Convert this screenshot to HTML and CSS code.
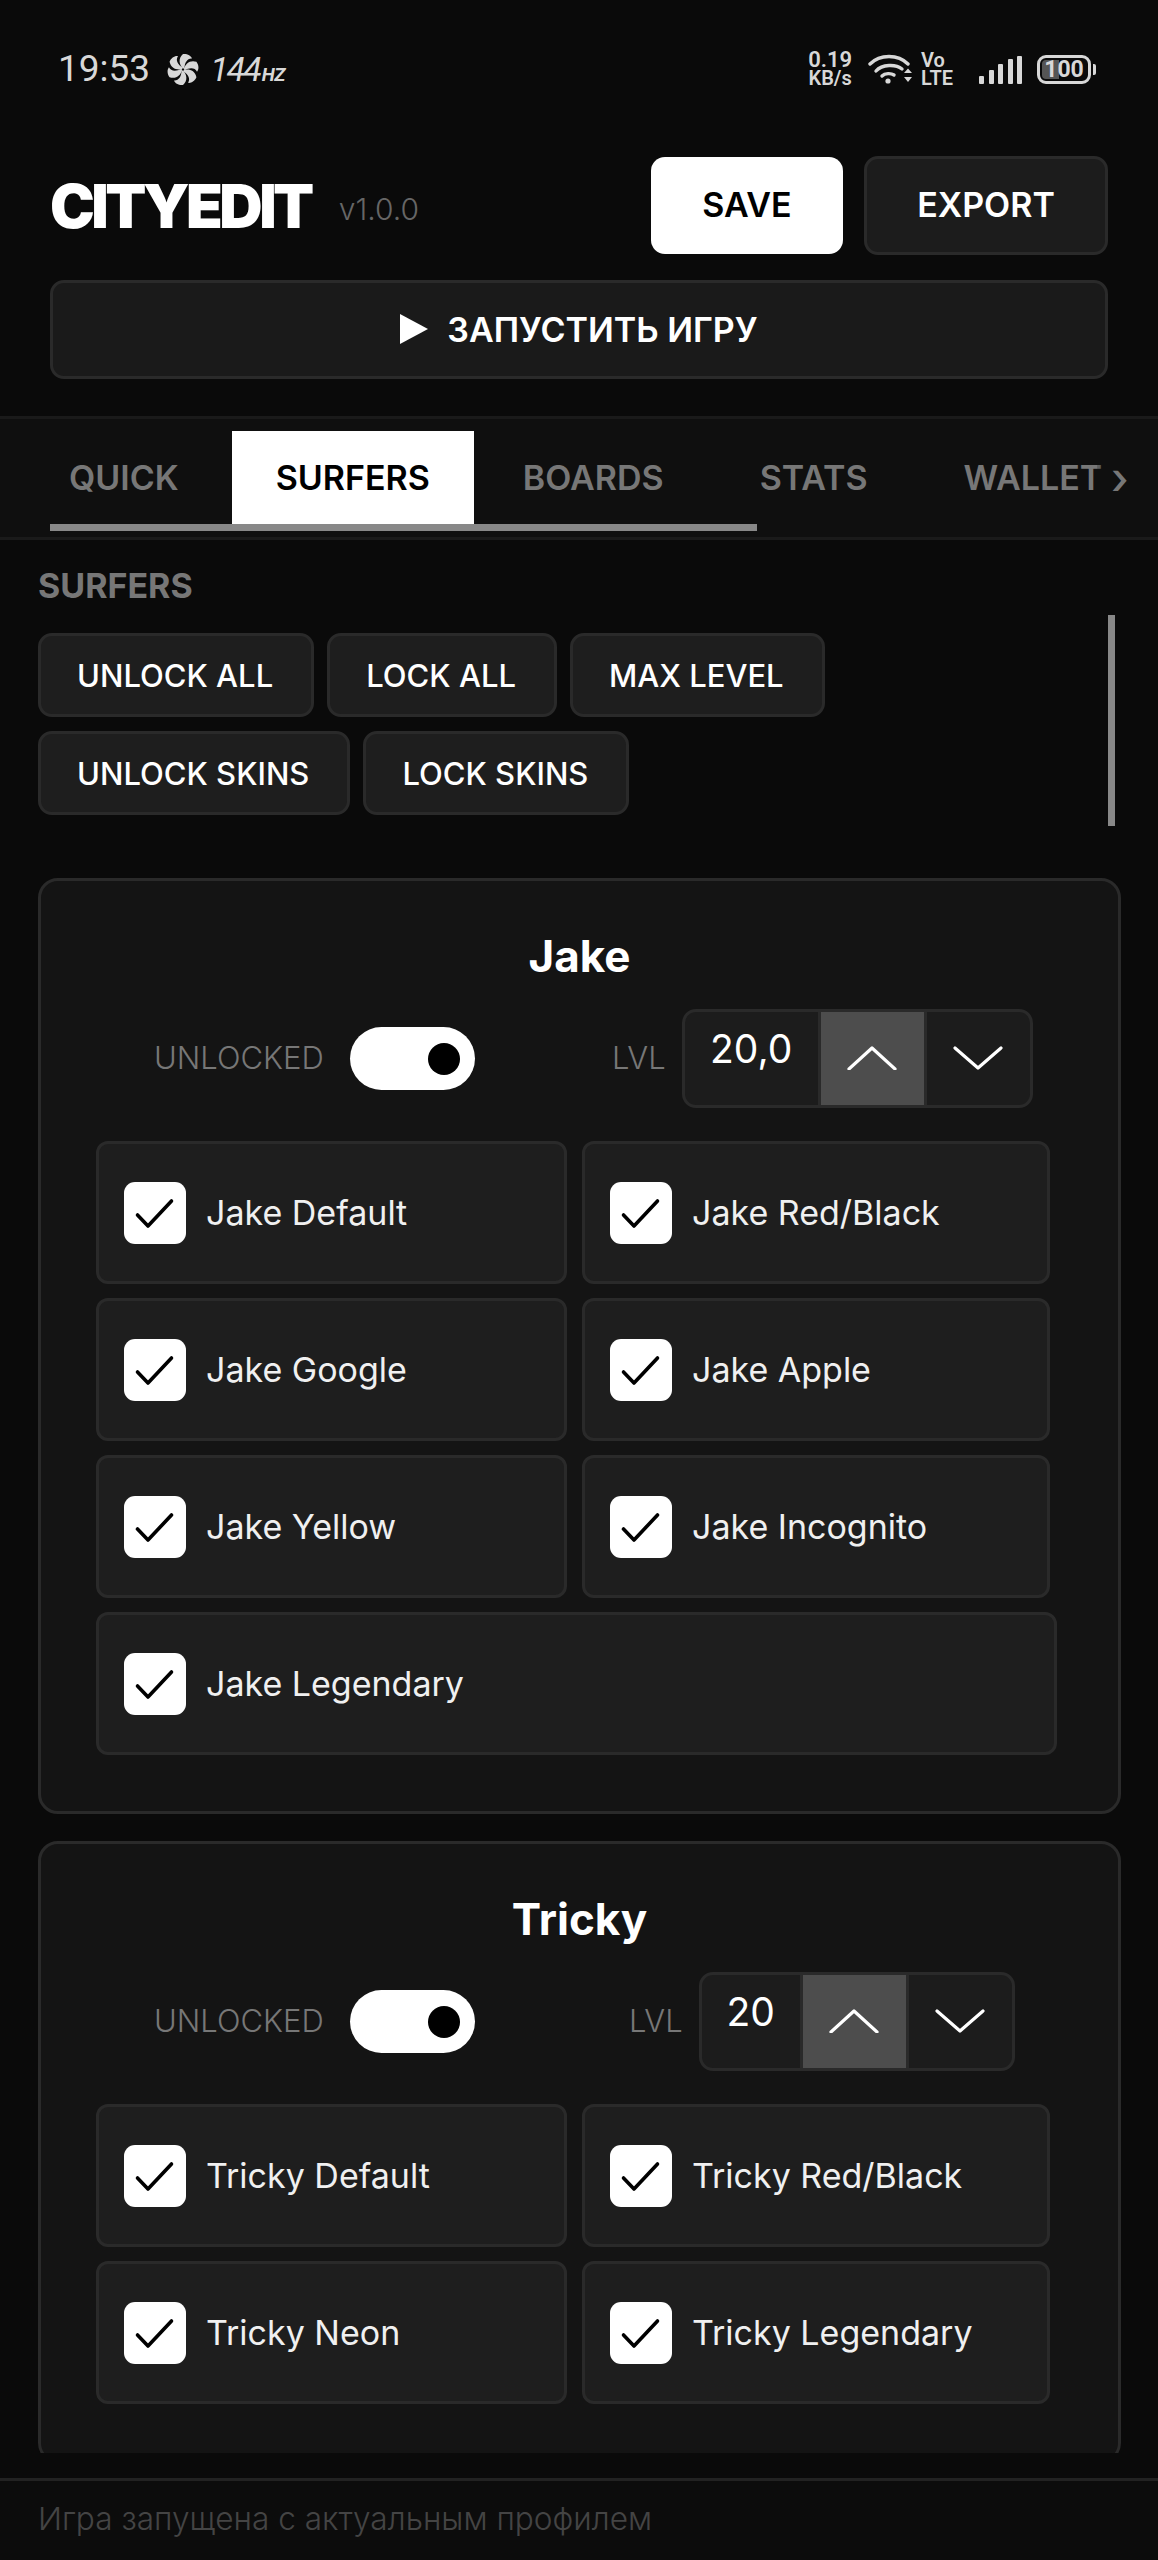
FILE: index.html
```html
<!DOCTYPE html>
<html lang="ru">
<head>
    <meta charset="UTF-8">
    <meta name="viewport" content="width=device-width, initial-scale=1.0">
    <title>CityEdit</title>
    <link rel="stylesheet" href="styles.css">
</head>
<body>

    <svg class="sprites" width="0" height="0">
        <symbol id="check" viewBox="0 0 62 62">
            <path d="M13.5 33 L24 44 L47.5 19" fill="none" stroke="#000" stroke-width="3.6" stroke-linecap="round" stroke-linejoin="round"/>
        </symbol>
        <symbol id="chev-up" viewBox="0 0 50 24">
            <path d="M2 23 L25 2 L48 23" fill="none" stroke="#fff" stroke-width="3.2" stroke-linecap="round" stroke-linejoin="round"/>
        </symbol>
        <symbol id="chev-down" viewBox="0 0 50 24">
            <path d="M2 2 L25 22 L48 2" fill="none" stroke="#fff" stroke-width="3.2" stroke-linecap="round" stroke-linejoin="round"/>
        </symbol>
    </svg>

    <div id="app">
        <div class="status">
            <div class="status-left">
                <span class="clock">19:53</span>
                <svg class="fan" width="32" height="33" viewBox="-16 -16 32 32">
                    <g fill="#d8d8d8">
                        <path id="blade" d="M0 -1 C-4 -5 -5 -11 0 -15.5 C4 -16 8 -14 9 -11 C4.5 -11.5 1.5 -7 1.5 -1 Z"/>
                        <use href="#blade" transform="rotate(60)"/>
                        <use href="#blade" transform="rotate(120)"/>
                        <use href="#blade" transform="rotate(180)"/>
                        <use href="#blade" transform="rotate(240)"/>
                        <use href="#blade" transform="rotate(300)"/>
                    </g>
                </svg>
                <span class="hz">144<small>HZ</small></span>
            </div>
            <div class="status-right">
                <div class="speed">0.19<br>KB/s</div>
                <svg class="wifi" width="44" height="30" viewBox="0 0 44 30">
                    <g fill="none" stroke="#d8d8d8" stroke-width="3.4" stroke-linecap="round">
                        <path d="M2 10 C12 0 30 0 40 10"/>
                        <path d="M8 17 C14 10 28 10 34 15"/>
                        <path d="M14 22 C17 19 23 19 26 21"/>
                    </g>
                    <circle cx="20" cy="27" r="2.6" fill="#d8d8d8"/>
                    <path d="M36 19 L40 14.5 L44 19 Z M36 23 L44 23 L40 28 Z" fill="#d8d8d8"/>
                </svg>
                <div class="volte">Vo<br>LTE</div>
                <div class="signal">
                    <i class="bar-1"></i><i class="bar-2"></i><i class="bar-3"></i><i class="bar-4"></i><i class="bar-5"></i>
                </div>
                <div class="battery"><div class="battery-body"><span>100</span></div><i></i></div>
            </div>
        </div>

        <div class="top">
            <div class="title-row">
                <div class="brand">
                    <span class="logo">CITYEDIT</span>
                    <span class="version">v1.0.0</span>
                </div>
                <div class="actions">
                    <button class="btn-save">SAVE</button>
                    <button class="btn-export">EXPORT</button>
                </div>
            </div>
            <button class="btn-run">
                <svg width="28" height="30" viewBox="0 0 28 30"><path d="M0 0 L28 15 L0 30 Z" fill="#fff"/></svg>
                ЗАПУСТИТЬ ИГРУ
            </button>
        </div>

        <div class="tabs">
            <div class="tab-row">
                <span class="tab">QUICK</span>
                <span class="tab active">SURFERS</span>
                <span class="tab">BOARDS</span>
                <span class="tab">STATS</span>
                <span class="tab">WALLET</span>
            </div>
            <div class="tab-fade">›</div>
            <div class="tab-scroll"></div>
        </div>

        <div class="content">
            <div class="content-scroll"></div>
            <div class="section-label">SURFERS</div>
            <div class="bulk">
                <div class="bulk-row">
                    <button class="btn-bulk">UNLOCK ALL</button>
                    <button class="btn-bulk">LOCK ALL</button>
                    <button class="btn-bulk">MAX LEVEL</button>
                </div>
                <div class="bulk-row">
                    <button class="btn-bulk">UNLOCK SKINS</button>
                    <button class="btn-bulk">LOCK SKINS</button>
                </div>
            </div>

            <div class="card">
                <h2>Jake</h2>
                <div class="controls jake-controls">
                    <div class="unlock">
                        <span class="muted">UNLOCKED</span>
                        <div class="toggle"><i></i></div>
                    </div>
                    <div class="level">
                        <span class="muted">LVL</span>
                        <div class="stepper">
                            <span class="value wide">20,0</span>
                            <span class="step hot"><svg width="50" height="24"><use href="#chev-up"/></svg></span>
                            <span class="step"><svg width="50" height="24"><use href="#chev-down"/></svg></span>
                        </div>
                    </div>
                </div>
                <div class="skins">
                    <label class="skin"><span class="box"><svg width="62" height="62"><use href="#check"/></svg></span>Jake Default</label>
                    <label class="skin"><span class="box"><svg width="62" height="62"><use href="#check"/></svg></span>Jake Red/Black</label>
                    <label class="skin"><span class="box"><svg width="62" height="62"><use href="#check"/></svg></span>Jake Google</label>
                    <label class="skin"><span class="box"><svg width="62" height="62"><use href="#check"/></svg></span>Jake Apple</label>
                    <label class="skin"><span class="box"><svg width="62" height="62"><use href="#check"/></svg></span>Jake Yellow</label>
                    <label class="skin"><span class="box"><svg width="62" height="62"><use href="#check"/></svg></span>Jake Incognito</label>
                    <label class="skin skin-wide"><span class="box"><svg width="62" height="62"><use href="#check"/></svg></span>Jake Legendary</label>
                </div>
            </div>

            <div class="card">
                <h2>Tricky</h2>
                <div class="controls tricky-controls">
                    <div class="unlock">
                        <span class="muted">UNLOCKED</span>
                        <div class="toggle"><i></i></div>
                    </div>
                    <div class="level">
                        <span class="muted">LVL</span>
                        <div class="stepper">
                            <span class="value">20</span>
                            <span class="step hot"><svg width="50" height="24"><use href="#chev-up"/></svg></span>
                            <span class="step"><svg width="50" height="24"><use href="#chev-down"/></svg></span>
                        </div>
                    </div>
                </div>
                <div class="skins">
                    <label class="skin"><span class="box"><svg width="62" height="62"><use href="#check"/></svg></span>Tricky Default</label>
                    <label class="skin"><span class="box"><svg width="62" height="62"><use href="#check"/></svg></span>Tricky Red/Black</label>
                    <label class="skin"><span class="box"><svg width="62" height="62"><use href="#check"/></svg></span>Tricky Neon</label>
                    <label class="skin"><span class="box"><svg width="62" height="62"><use href="#check"/></svg></span>Tricky Legendary</label>
                </div>
            </div>
        </div>

        <div class="footer">Игра запущена с актуальным профилем</div>
    </div>

</body>
</html>
```

FILE: styles.css
```css
* {
    box-sizing: border-box;
}

body {
    margin: 0;
    background-color: #0a0a0a;
    color: #fff;
    font-family: Inter, 'Noto Sans', sans-serif;
}

button {
    font-family: inherit;
    cursor: pointer;
}

.sprites {
    position: absolute;
}

#app {
    width: 1158px;
    height: 2560px;
    display: flex;
    flex-direction: column;
    overflow: hidden;
}

/* status bar */
.status {
    height: 156px;
    flex: none;
    padding: 0 62px 0 58px;
    display: flex;
    justify-content: space-between;
    align-items: flex-start;
    font-family: Roboto, sans-serif;
    color: #d8d8d8;
}

.status-left {
    height: 140px;
    padding-top: 50px;
    display: flex;
    align-items: flex-start;
}

.clock {
    font-size: 37px;
    line-height: 38px;
}

.fan {
    margin: 3px 0 0 17px;
}

.hz {
    margin-left: 11px;
    font-size: 34px;
    line-height: 38px;
    font-style: italic;
    letter-spacing: -2px;
}

.hz small {
    margin-left: 2px;
    font-size: 19px;
    font-weight: 700;
    letter-spacing: -0.5px;
}

.status-right {
    padding-top: 51px;
    display: flex;
    align-items: flex-start;
}

.speed,
.volte {
    font-size: 20px;
    line-height: 18px;
    font-weight: 600;
    text-align: center;
}

.speed::first-line {
    font-size: 22px;
}

.wifi {
    margin: 3px 0 0 14px;
}

.volte {
    margin-left: 9px;
    text-align: left;
}

.signal {
    margin: 5px 0 0 26px;
    width: 43px;
    height: 28px;
    display: flex;
    align-items: flex-end;
    justify-content: space-between;
}

.signal i {
    width: 5px;
    background-color: #d8d8d8;
    border-radius: 1px;
}

.bar-1 { height: 8px; }
.bar-2 { height: 14px; }
.bar-3 { height: 20px; }
.bar-4 { height: 25px; }
.bar-5 { height: 28px; }

.battery {
    margin: 4px 0 0 15px;
    display: flex;
    align-items: center;
    gap: 2px;
}

.battery-body {
    width: 54px;
    height: 29px;
    border: 3px solid #d8d8d8;
    border-radius: 9px;
    padding: 2px;
    display: flex;
    align-items: center;
    justify-content: center;
    background: linear-gradient(90deg, #555 0, #555 40%, #0a0a0a 40%);
    background-clip: content-box;
    font-size: 23px;
    font-weight: 700;
    line-height: 1;
}

.battery i {
    width: 3px;
    height: 11px;
    background-color: #d8d8d8;
    border-radius: 0 2px 2px 0;
}

/* header */
.top {
    height: 260px;
    flex: none;
    padding: 0 50px;
}

.title-row {
    height: 99px;
    display: flex;
    justify-content: space-between;
    align-items: center;
}

.brand {
    display: flex;
    align-items: center;
    gap: 28px;
}

.logo {
    font-size: 60px;
    font-weight: 900;
    letter-spacing: -3.5px;
    line-height: 1;
}

.version {
    margin-top: 6px;
    font-size: 30px;
    font-weight: 300;
    color: #666;
}

.actions {
    display: flex;
    align-items: center;
    gap: 21px;
}

.btn-save {
    width: 192px;
    height: 97px;
    padding-bottom: 4px;
    border: none;
    border-radius: 14px;
    background-color: #fff;
    color: #000;
    font-size: 34px;
    font-weight: 600;
}

.btn-export {
    width: 244px;
    height: 99px;
    padding-bottom: 4px;
    border: 3px solid #2a2a2a;
    border-radius: 14px;
    background-color: #1c1c1c;
    color: #fff;
    font-size: 34px;
    font-weight: 600;
}

.btn-run {
    width: 100%;
    height: 99px;
    margin-top: 25px;
    padding-bottom: 2px;
    display: flex;
    align-items: center;
    justify-content: center;
    gap: 19px;
    border: 3px solid #2a2a2a;
    border-radius: 14px;
    background-color: #1a1a1a;
    color: #fff;
    font-size: 34px;
    font-weight: 600;
}

/* tabs */
.tabs {
    position: relative;
    height: 124px;
    flex: none;
    padding-top: 12px;
    background-color: #0f0f0f;
    border-top: 3px solid #1a1a1a;
    border-bottom: 3px solid #1a1a1a;
    overflow: hidden;
}

.tab-row {
    height: 93px;
    padding-left: 25px;
    display: flex;
    gap: 8px;
    white-space: nowrap;
}

.tab {
    padding: 0 44px;
    display: flex;
    align-items: center;
    color: #777;
    font-size: 34px;
    font-weight: 600;
    flex: none;
}

.tab.active {
    margin-left: 1px;
    background-color: #fff;
    color: #000;
}

.tab.active + .tab {
    margin-left: -3px;
}

.tab-fade {
    position: absolute;
    top: 0;
    right: 0;
    width: 61px;
    height: 118px;
    padding: 32px 0 0 14px;
    background: linear-gradient(90deg, rgba(15, 15, 15, 0.2), #0f0f0f 50%);
    color: #777;
    font-size: 44px;
    font-weight: 500;
}

.tab-scroll {
    width: 707px;
    height: 7px;
    margin-left: 50px;
    background-color: #888;
}

/* content */
.content {
    position: relative;
    height: 1913px;
    flex: none;
    padding: 0 38px;
    overflow: hidden;
}

.content-scroll {
    position: absolute;
    top: 75px;
    left: 1108px;
    width: 7px;
    height: 211px;
    background-color: #888;
}

.section-label {
    height: 93px;
    padding-top: 26px;
    color: #777;
    font-size: 34px;
    font-weight: 700;
    line-height: 40px;
}

.bulk {
    display: flex;
    flex-direction: column;
    gap: 14px;
}

.bulk-row {
    display: flex;
    gap: 13px;
}

.btn-bulk {
    height: 84px;
    padding: 0 38px 0 36px;
    border: 3px solid #2a2a2a;
    border-radius: 14px;
    background-color: #1e1e1e;
    color: #fff;
    font-size: 31px;
    font-weight: 500;
}

.card {
    width: 1083px;
    margin-top: 27px;
    border: 3px solid #2a2a2a;
    border-radius: 20px;
    background-color: #141414;
    padding: 0 55px 56px;
}

.bulk + .card {
    margin-top: 63px;
}

.card h2 {
    height: 128px;
    margin: 0;
    padding-top: 50px;
    text-align: center;
    font-size: 44px;
    line-height: 50px;
    font-weight: 700;
}

.controls {
    height: 132px;
    display: flex;
    align-items: flex-start;
}

.jake-controls {
    gap: 137px;
}

.tricky-controls {
    gap: 154px;
}

.unlock {
    margin: 18px 0 0 58px;
    display: flex;
    align-items: center;
    gap: 26px;
}

.muted {
    padding-bottom: 2px;
    color: #777;
    font-size: 31px;
    font-weight: 300;
}

.toggle {
    width: 125px;
    height: 63px;
    padding-right: 15px;
    display: flex;
    align-items: center;
    justify-content: flex-end;
    border-radius: 32px;
    background-color: #fff;
}

.toggle i {
    width: 32px;
    height: 32px;
    border-radius: 50%;
    background-color: #000;
}

.level {
    display: flex;
    align-items: center;
    gap: 16px;
}

.stepper {
    height: 99px;
    display: flex;
    border: 3px solid #2a2a2a;
    border-radius: 14px;
    background-color: #1c1c1c;
    overflow: hidden;
}

.value {
    width: 98px;
    padding: 14px 0 0;
    text-align: center;
    font-size: 39px;
    line-height: 46px;
}

.value.wide {
    width: 133px;
}

.step {
    width: 106px;
    display: flex;
    align-items: flex-start;
    justify-content: center;
    padding-top: 34px;
    border-left: 3px solid #2a2a2a;
}

.step.hot {
    background-color: #4d4d4d;
}

.skins {
    display: grid;
    grid-template-columns: 471px 468px;
    grid-auto-rows: 143px;
    gap: 14px 15px;
}

.skin {
    display: flex;
    align-items: center;
    gap: 20px;
    padding-left: 25px;
    border: 3px solid #2a2a2a;
    border-radius: 12px;
    background-color: #1e1e1e;
    font-size: 34px;
    font-weight: 400;
    color: #f0f0f0;
}

.skin-wide {
    grid-column: 1 / -1;
    margin-right: -7px;
}

.box {
    width: 62px;
    height: 62px;
    flex: none;
    border-radius: 11px;
    background-color: #fff;
}

.box svg {
    display: block;
}

/* footer */
.footer {
    height: 82px;
    margin-top: 25px;
    flex: none;
    padding: 17px 38px 0;
    background-color: #0c0c0c;
    border-top: 3px solid #222;
    color: #444;
    font-size: 31.6px;
    font-weight: 300;
    line-height: 42px;
}
```
